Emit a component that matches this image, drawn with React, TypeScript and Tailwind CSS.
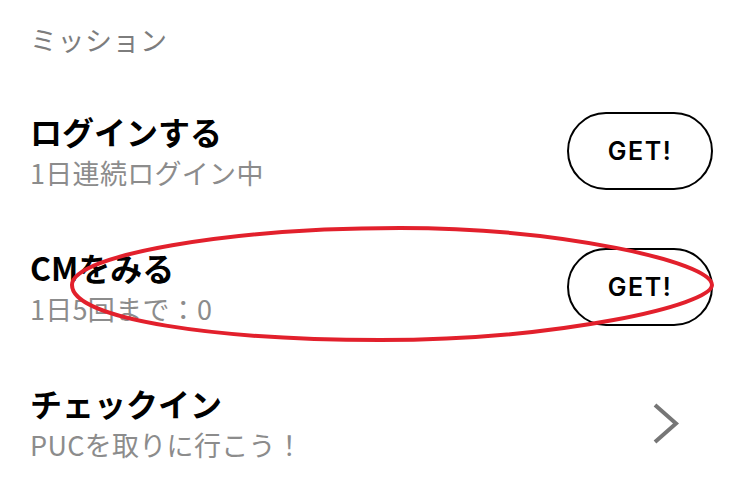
import React from "react";

const jp = { fontFamily: '"Noto Sans CJK JP", "Noto Sans", sans-serif' };

function GetButton() {
  return (
    <button className="h-[78px] w-[146px] rounded-full border-2 border-black bg-white flex items-center justify-center">
      <span
        className="text-[25px] font-semibold tracking-[1.5px] text-black leading-none"
        style={{ fontFamily: 'Inter, "Liberation Sans", sans-serif' }}
      >
        GET!
      </span>
    </button>
  );
}

function Row({ title, sub, right }: { title: string; sub: string; right: React.ReactNode }) {
  return (
    <div className="h-[78px] flex items-center justify-between">
      <div className="flex flex-col gap-[12px]">
        <div className="text-[32px] leading-[31px] font-semibold text-black">{title}</div>
        <div className="text-[27px] leading-[27px] tracking-[0.3px] text-[#8c8c8c]">{sub}</div>
      </div>
      {right}
    </div>
  );
}

export default function App() {
  return (
    <div className="relative w-[740px] h-[503px] bg-white overflow-hidden" style={jp}>
      <div className="pl-[30px] pr-[27px] pt-[26px]">
        <div className="text-[27px] leading-[27px] tracking-[0.5px] text-[#7d7d7d]">ミッション</div>
        <div className="mt-[59px] flex flex-col gap-[58px]">
          <Row title="ログインする" sub="1日連続ログイン中" right={<GetButton />} />
          <Row title="CMをみる" sub="1日5回まで：0" right={<GetButton />} />
          <Row
            title="チェックイン"
            sub="PUCを取りに行こう！"
            right={
              <svg width="146" height="78" viewBox="0 0 146 78" className="block">
                <path d="M88 21 L109 39.5 L88 58" fill="none" stroke="#767676" strokeWidth="4" />
              </svg>
            }
          />
        </div>
      </div>
      <svg
        className="absolute inset-0 pointer-events-none"
        width="740"
        height="503"
        viewBox="0 0 740 503"
      >
        <path
          d="M72 285 C72 255 230 228 400 228 C560 228 712 262 712 285 C712 305 560 340 380 340 C220 340 72 320 72 285 Z"
          fill="none"
          stroke="#e2202c"
          strokeWidth="4"
        />
      </svg>
    </div>
  );
}
